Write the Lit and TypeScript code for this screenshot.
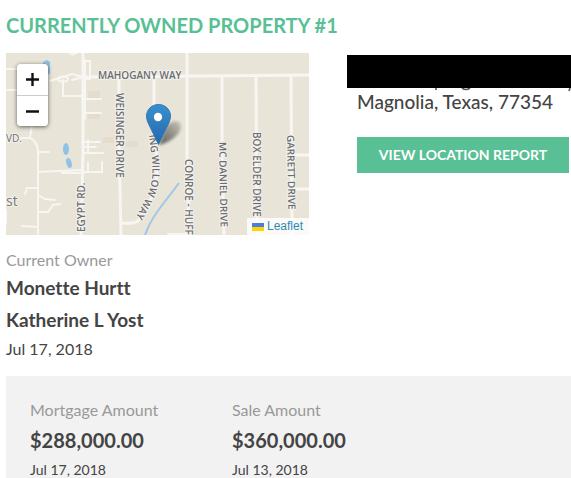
import { LitElement, html, css, svg } from "lit";
import { customElement, property } from "lit/decorators.js";

const ROADS = [
  "M77 0V100L75 182",
  "M77 24L303 22",
  "M113 24V90L115 182",
  "M181 0V100L183 182",
  "M216 23V100L218 182",
  "M250 23L251 182",
  "M285 23L286 182",
  "M148 23V85Q156 125 143 150L132 168Q128 171 115 170",
  "M288 102H303M288 136H303",
];

const LANES = [
  "M0 16H12M0 37H12",
  "M77 24L66 21L44 28M57 27V43H76M77 24L66 27",
  "M79 7V66M79 8H84V26H79M77 46H95M77 60H95M77 89H94",
  "M26 73L24 84M13 85H24Q32 88 32 100V182",
  "M32 99H43M32 119L76 117M56 120H76M77 119H96V109M82 119V109",
  "M82 87V100M77 100H97M77 94H90",
  "M19 141L21 135H32M32 142L39 146L49 147M32 159H42L47 152L54 151M16 173L32 174",
  "M64 0Q66 3 70 0M162 181H182M0 157V171",
];

const STREETS: Array<[string, number, number, number]> = [
  ["MAHOGANY WAY", 92, 26, 0],
  ["WEISINGER DRIVE", 110, 40, 90],
  ["EGYPT RD.", 79, 179, -90],
  ["CONROE - HUFF", 179, 106, 90],
  ["MC DANIEL DRIVE", 213, 89, 89],
  ["BOX ELDER DRIVE", 247, 79, 90],
  ["GARRETT DRIVE", 281, 82, 89],
];

@customElement("location-map")
class LocationMap extends LitElement {
  static styles = css`
    :host {
      display: block;
      position: relative;
      overflow: hidden;
      background: #e8e4d8;
    }
    .tiles {
      display: block;
      width: 100%;
      height: 182px;
    }
    .road, .lane { fill: none; stroke: #f7f6f2; stroke-linecap: round; }
    .road { stroke-width: 3; }
    .lane { stroke-width: 2; }
    .water { fill: #8fc2e6; }
    .stream { fill: none; stroke: #9dc8e6; stroke-width: 2; }
    .plot { fill: #e2d7c5; }
    .street, .place {
      font-family: "Open Sans", "Noto Sans", sans-serif;
      fill: #6a6c72;
      stroke: #f4f2ec;
      stroke-width: 2px;
      stroke-linejoin: round;
      paint-order: stroke;
    }
    .street { font-size: 10px; font-weight: 600; }
    .edge { font-weight: 400; }
    .place { font-size: 14px; fill: #777; }
    .zoom {
      position: absolute;
      top: 11px;
      left: 11px;
      display: flex;
      flex-direction: column;
      border-radius: 4px;
      overflow: hidden;
      box-shadow: 0 1px 4px rgba(0, 0, 0, 0.6);
    }
    .zoom button {
      width: 31px;
      height: 31px;
      padding: 0;
      border: 0;
      background: #fff;
      display: grid;
      place-items: center;
    }
    .zoom button + button { border-top: 1px solid #ccc; }
    .zoom svg { width: 13px; height: 13px; stroke: #111; stroke-width: 2.4; }
    .credit {
      position: absolute;
      right: 0;
      bottom: 0;
      display: flex;
      align-items: center;
      gap: 3px;
      padding: 0 6px 0 5px;
      background: rgba(255, 255, 255, 0.8);
      color: #2b8cb4;
      font: 12px/17px "Liberation Sans", Arial, sans-serif;
      text-decoration: none;
    }
    .credit svg { width: 12px; height: 8px; }
  `;

  render() {
    return html`
      <svg class="tiles" viewBox="0 0 303 182" preserveAspectRatio="xMidYMid slice" role="img" aria-label="Property map">
        <defs>
          <linearGradient id="pin" x1="0" y1="0" x2="0" y2="1">
            <stop offset="0" stop-color="#3a8fcf" />
            <stop offset="1" stop-color="#2468ab" />
          </linearGradient>
          <linearGradient id="fade" x1="0" y1="1" x2="1" y2="0">
            <stop offset="0" stop-color="#000" stop-opacity="0.6" />
            <stop offset="1" stop-color="#000" stop-opacity="0.15" />
          </linearGradient>
          <filter id="soft" x="-30%" y="-30%" width="160%" height="160%">
            <feGaussianBlur stdDeviation="1.8" />
          </filter>
          <path id="willow" d="M143 82L146 108Q148 128 141 143L124 175" />
        </defs>
        <path class="plot" d="M82 38H94V45H82zM82 60H94V66H82zM97 84H108V90H97zM120 88H132V94H120z" opacity="0.6" />
        <path class="water" d="M37 9L41 7Q45 8 44 12V20Q42 23 39 21L37 15z" />
        <ellipse class="water" cx="60" cy="96" rx="3" ry="6" />
        <ellipse class="water" cx="63" cy="110" rx="2.6" ry="5" transform="rotate(-16 63 110)" />
        <path class="stream" d="M139 182Q144 168 154 155L173 130" />
        ${LANES.map((d) => svg`<path class="lane" d=${d} />`)}
        <ellipse class="lane" cx="57" cy="26" rx="5" ry="2.5" />
        ${ROADS.map((d) => svg`<path class="road" d=${d} />`)}
        ${STREETS.map(
          ([name, x, y, turn]) =>
            svg`<text class="street" transform=${`translate(${x} ${y}) rotate(${turn})`}>${name}</text>`
        )}
        <text class="street"><textPath href="#willow">ING WILLOW WAY</textPath></text>
        <text class="street edge" x="0" y="89">VD.</text>
        <text class="place" x="0" y="153">st</text>
        <path d="M153 92L160 74Q168 65 174 70Q177 77 169 84Q162 90 153 92z" fill="url(#fade)" filter="url(#soft)" />
        <path
          d="M152.500 51.500C145.500 51.500 140.500 56.700 140.500 63.200C140.500 66.300 141.900 69.500 143 71.800L152.500 91.500L162 71.800C163.100 69.500 164.500 66.300 164.500 63.200C164.500 56.700 159.500 51.500 152.500 51.500z"
          fill="url(#pin)" stroke="#2e7ab5" stroke-width="1" />
        <circle cx="152" cy="64" r="4.200" fill="#fff" />
      </svg>
      <div class="zoom">
        <button aria-label="Zoom in"><svg viewBox="0 0 13 13"><path d="M0 6.500H13M6.500 0V13" /></svg></button>
        <button aria-label="Zoom out"><svg viewBox="0 0 13 13"><path d="M0 6.500H13" /></svg></button>
      </div>
      <a class="credit" href="#leaflet">
        <svg viewBox="0 0 12 8" aria-hidden="true"><path fill="#4c7be1" d="M0 0h12v4H0z" /><path fill="#ffd500" d="M0 4h12v4H0z" /></svg>
        Leaflet
      </a>
    `;
  }
}

@customElement("amount-item")
class AmountItem extends LitElement {
  @property() label = "";
  @property() amount = "";
  @property() date = "";

  static styles = css`
    :host { display: block; }
    .label { font-size: 16px; line-height: 24px; color: #999; }
    .amount { font-size: 20px; line-height: 36px; font-weight: 700; color: #444; }
    .date { font-size: 14px; line-height: 24px; color: #444; }
  `;

  render() {
    return html`
      <div class="label">${this.label}</div>
      <div class="amount">${this.amount}</div>
      <div class="date">${this.date}</div>
    `;
  }
}

@customElement("app-root")
class AppRoot extends LitElement {
  static styles = css`
    :host {
      display: block;
      box-sizing: border-box;
      padding: 9px 0 0 6px;
      background: #fff;
      color: #444;
      font-family: Lato, sans-serif;
      font-variant-ligatures: none;
    }
    h1 {
      margin: 0 0 12px;
      font-size: 20px;
      line-height: 32px;
      font-weight: 700;
      color: #59bf95;
    }
    .property {
      display: flex;
      gap: 48px;
    }
    .map { flex: 0 1 303px; }
    .place { flex: 1; min-width: 0; }
    address {
      position: relative;
      padding-top: 35px;
      font-style: normal;
      font-size: 19px;
      line-height: 28px;
      font-weight: 500;
      white-space: nowrap;
    }
    .redaction {
      position: absolute;
      top: 2px;
      left: -10px;
      right: 0;
      height: 33px;
      background: #000;
    }
    .tails {
      position: absolute;
      top: 35px;
      left: 0;
      width: 214px;
      height: 4px;
      fill: none;
      stroke: #555;
      stroke-width: 1.6;
    }
    .report {
      display: block;
      margin-top: 21px;
      width: 212px;
      max-width: 100%;
      height: 36px;
      padding: 0;
      border: 0;
      background: #59bf95;
      color: #fff;
      font: 700 14px/36px Lato, sans-serif;
      white-space: nowrap;
    }
    .owners { padding: 13px 0 14px; }
    .label { font-size: 16px; line-height: 24px; color: #999; }
    .name { font-size: 19px; line-height: 32px; font-weight: 700; }
    .date { font-size: 16px; line-height: 26px; }
    .amounts {
      display: grid;
      grid-template-columns: 202px 1fr;
      padding: 22px 24px 0;
      background: #f2f2f2;
    }
  `;

  render() {
    return html`
      <h1>CURRENTLY OWNED PROPERTY #1</h1>
      <section class="property">
        <location-map class="map"></location-map>
        <div class="place">
          <address>
            <span class="redaction"></span>
            <svg class="tails" viewBox="0 0 214 4" aria-hidden="true">
              <path d="M79 0V2M105 0Q109 3 113 0M213 0L212 3" />
            </svg>
            Magnolia, Texas, 77354
          </address>
          <button class="report">VIEW LOCATION REPORT</button>
        </div>
      </section>
      <section class="owners">
        <div class="label">Current Owner</div>
        <div class="name">Monette Hurtt</div>
        <div class="name">Katherine L Yost</div>
        <div class="date">Jul 17, 2018</div>
      </section>
      <section class="amounts">
        <amount-item label="Mortgage Amount" amount="$288,000.00" date="Jul 17, 2018"></amount-item>
        <amount-item label="Sale Amount" amount="$360,000.00" date="Jul 13, 2018"></amount-item>
      </section>
    `;
  }
}
